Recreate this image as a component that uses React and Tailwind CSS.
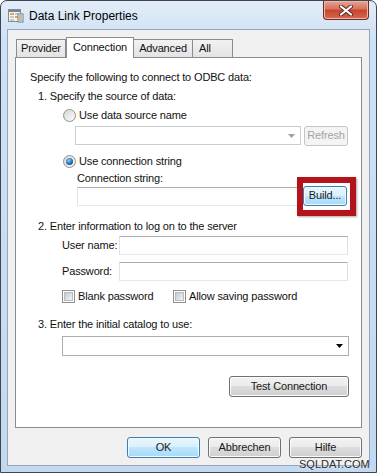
import React from "react";

const btn =
  "flex items-center justify-center border border-[#707070] rounded-[3px] bg-[linear-gradient(#f2f2f2_0%,#ebebeb_49%,#dddddd_50%,#cfcfcf_100%)] shadow-[inset_0_0_0_1px_#fbfbfb] text-[#1a1a1a]";
const blueBtn =
  "flex items-center justify-center border border-[#3c7fb1] rounded-[3px] bg-[linear-gradient(#eaf6fd_0%,#d9f0fc_49%,#bee6fd_50%,#a7d9f5_100%)] shadow-[inset_0_0_0_1px_#f0fafe] text-[#1a1a1a]";
const input = "bg-white border border-[#abadb3] border-b-[#e3e9ef] border-r-[#dbdfe6] border-l-[#e2e3ea]";

function Radio({ checked }) {
  return (
    <span className="w-[13px] h-[13px] rounded-full border border-[#8e8f8f] bg-[linear-gradient(135deg,#d8d8d8,#fafafa)] flex items-center justify-center">
      {checked && (
        <span className="w-[7px] h-[7px] rounded-full bg-[radial-gradient(circle_at_40%_35%,#8ad0f5,#1d64a8_60%,#0f3f74)]" />
      )}
    </span>
  );
}

function Check() {
  return (
    <span className="w-[13px] h-[13px] border border-[#8e8f8f] bg-white p-[1px]">
      <span className="block w-full h-full bg-[linear-gradient(135deg,#c4c8ce,#f4f4f4)] border border-[#b8bcc2]" />
    </span>
  );
}

function Arrow({ color = "#000" }) {
  return (
    <svg width="7" height="4" viewBox="0 0 7 4">
      <path d="M0 0h7L3.5 4z" fill={color} />
    </svg>
  );
}

function TitleIcon() {
  return (
    <svg width="16" height="14" viewBox="0 0 16 14">
      <rect x="0.5" y="0.5" width="12" height="12" fill="#f4f4f4" stroke="#8a8a8a" />
      <rect x="1" y="1" width="11" height="2" fill="#6d86a8" />
      <rect x="2" y="4" width="4" height="2" fill="#e8a24a" />
      <rect x="7" y="4" width="4" height="2" fill="#c9c9c9" />
      <rect x="2" y="7" width="4" height="2" fill="#c9c9c9" />
      <rect x="7" y="7" width="4" height="2" fill="#e8a24a" />
      <rect x="2" y="10" width="4" height="2" fill="#c9c9c9" />
      <rect x="10" y="5" width="5" height="8" fill="#fff" stroke="#7a7a7a" />
      <path d="M11 7h3M11 9h3M11 11h3" stroke="#7a7a7a" />
    </svg>
  );
}

export default function App() {
  return (
    <div
      className="relative w-[377px] h-[473px] overflow-hidden rounded-t-[7px] border border-[#3d4652] bg-[linear-gradient(#e2edf8_0%,#cfe1f4_8%,#c3d9f0_100%)] text-[11px] tracking-[-0.15px] text-[#111]"
      style={{ fontFamily: '"Liberation Sans", Arial, sans-serif' }}
    >
      {/* title bar */}
      <div className="h-[28px] flex items-start">
        <div className="ml-[7px] mt-[8px]">
          <TitleIcon />
        </div>
        <div className="ml-[5px] mt-[8px] text-[12px] text-black leading-[15px] tracking-normal">Data Link Properties</div>
        <div className="ml-auto mr-[7px] w-[46px] h-[19px] rounded-b-[4px] border border-t-0 border-[#6b2a22] bg-[linear-gradient(#e8a493_0%,#d7705d_45%,#c7432c_50%,#d36a4f_100%)] shadow-[inset_0_0_0_1px_#f0b6a8] flex items-center justify-center">
          <svg width="14" height="11" viewBox="0 0 14 11">
            <path d="M2 1.5l10 8M12 1.5l-10 8" stroke="#5a2a22" strokeWidth="4" strokeLinecap="round" />
            <path d="M2 1.5l10 8M12 1.5l-10 8" stroke="#fff" strokeWidth="2.2" strokeLinecap="round" />
          </svg>
        </div>
      </div>

      {/* client area */}
      <div className="ml-[6px] w-[363px] h-[437px] border border-[#93a6c0] bg-[#f0f0f0]">
        {/* tabs */}
        <div className="pl-[8px] pt-[7px] h-[27px] flex items-end">
          <div className="h-[18px] w-[50px] border border-b-0 border-[#898c95] bg-[linear-gradient(#f2f2f2,#e3e3e3)] flex items-center justify-center">
            Provider
          </div>
          <div className="relative z-10 -mb-[1px] h-[21px] w-[68px] border border-b-0 border-[#898c95] bg-white flex items-center justify-center pb-[2px]">
            Connection
          </div>
          <div className="h-[18px] w-[59px] border border-b-0 border-l-0 border-[#898c95] bg-[linear-gradient(#f2f2f2,#e3e3e3)] flex items-center justify-center">
            Advanced
          </div>
          <div className="h-[18px] w-[40px] border border-b-0 border-l-0 border-[#898c95] bg-[linear-gradient(#f2f2f2,#e3e3e3)] flex items-center pl-[6px]">
            All
          </div>
        </div>

        {/* panel */}
        <div className="relative ml-[7px] w-[347px] h-[371px] border border-[#898c95] bg-white">
          <div className="mt-[11px] ml-[14px] h-[16px] leading-[16px]">
            Specify the following to connect to ODBC data:
          </div>
          <div className="mt-[3px] ml-[22px] h-[16px] leading-[16px]">1. Specify the source of data:</div>
          <div className="mt-[3px] ml-[47px] h-[16px] flex items-center gap-[3px]">
            <Radio />
            <span>Use data source name</span>
          </div>
          <div className="mt-[3px] ml-[59px] h-[19px] flex items-center">
            <div className="w-[226px] h-[19px] border border-[#c9cdd2] bg-white flex items-center justify-end pr-[5px]">
              <Arrow color="#a0a0a0" />
            </div>
            <div className="ml-[3px] w-[44px] h-[20px] border border-[#c5c5c5] rounded-[3px] bg-[#f4f4f4] text-[#a3a3a3] flex items-center justify-center">
              Refresh
            </div>
          </div>
          <div className="mt-[8px] ml-[47px] h-[16px] flex items-center gap-[3px]">
            <Radio checked />
            <span>Use connection string</span>
          </div>
          <div className="mt-[1px] ml-[61px] h-[16px] leading-[16px]">Connection string:</div>
          <div className="mt-[1px] ml-[61px] h-[19px] flex items-center">
            <div className={`${input} w-[223px] h-[19px]`} />
            <div className={`${blueBtn} ml-[3px] w-[44px] h-[20px] -mt-[2px]`}>Build...</div>
          </div>
          <div className="absolute left-[281px] top-[119px] w-[59px] h-[39px] border-[6px] border-[#b5131b] shadow-[1px_1px_2px_rgba(0,0,0,0.35)]" />

          <div className="mt-[12px] ml-[22px] h-[16px] leading-[16px]">2. Enter information to log on to the server</div>
          <div className="mt-[2px] ml-[46px] h-[19px] flex items-center">
            <span className="w-[57px]">User name:</span>
            <div className={`${input} w-[229px] h-[19px]`} />
          </div>
          <div className="mt-[7px] ml-[46px] h-[19px] flex items-center">
            <span className="w-[57px]">Password:</span>
            <div className={`${input} w-[229px] h-[19px]`} />
          </div>
          <div className="mt-[7px] ml-[46px] h-[16px] flex items-center">
            <Check />
            <span className="ml-[3px] w-[95px]">Blank password</span>
            <Check />
            <span className="ml-[3px]">Allow saving password</span>
          </div>
          <div className="mt-[12px] ml-[22px] h-[16px] leading-[16px]">3. Enter the initial catalog to use:</div>
          <div className="mt-[4px] ml-[46px] w-[287px] h-[20px] border border-[#abadb3] bg-white flex items-center justify-end pr-[5px]">
            <Arrow />
          </div>
          <div className={`${btn} mt-[20px] ml-[213px] w-[120px] h-[21px]`}>Test Connection</div>
        </div>

        {/* bottom buttons */}
        <div className="mt-[9px] pl-[119px] flex gap-[8px]">
          <div className={`${blueBtn} w-[73px] h-[21px]`}>OK</div>
          <div className={`${btn} w-[73px] h-[21px]`}>Abbrechen</div>
          <div className={`${btn} w-[73px] h-[21px]`}>Hilfe</div>
        </div>
      </div>

      <div className="absolute left-[298px] top-[457px] text-[11px] leading-[12px] tracking-normal text-[#2a2a2a] [text-shadow:0_0_2px_#fff]">
        SQLDAT.COM
      </div>
    </div>
  );
}
